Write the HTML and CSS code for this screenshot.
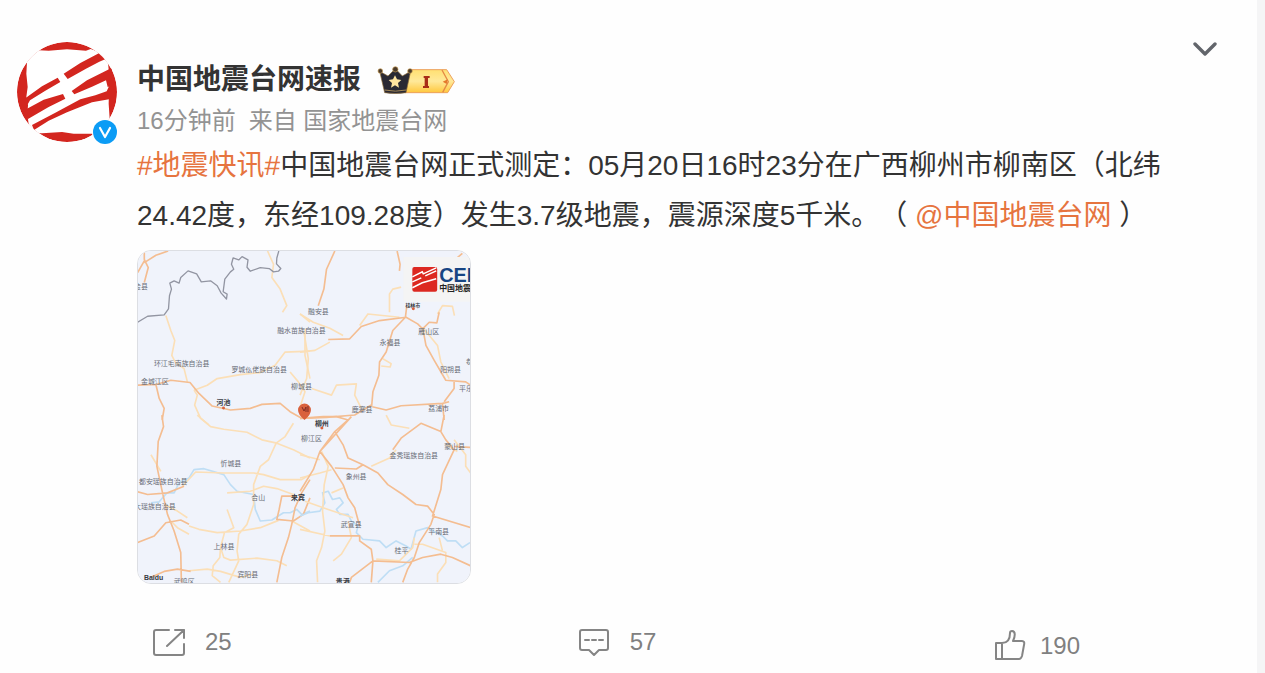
FILE: index.html
```html
<!DOCTYPE html>
<html lang="zh-CN">
<head>
<meta charset="utf-8">
<meta name="viewport" content="width=device-width, initial-scale=1">
<title>中国地震台网速报</title>
<link rel="stylesheet" href="styles.css">
</head>
<body>
<article class="card">
  <header class="head">
    <a class="avatar" href="#" aria-label="中国地震台网速报">
      <svg class="avatar-img" viewBox="15 15 300 300" aria-hidden="true">
        <defs><clipPath id="round"><circle cx="165" cy="165" r="150"/></clipPath></defs>
        <g clip-path="url(#round)">
          <circle cx="165" cy="165" r="150" fill="#d3261f"/>
          <path fill="#fff" d="M0 0H80V40L110 41 165 37 222 41 236 36 270 48 288 76 292 120 290 200 293 245 285 290 240 290 185 290 150 285 90 289 40 289 50 262 46 232 48 205 43 180 47 150 43 110 45 75 0 75Z"/>
          <path fill="#d3261f" d="M155 110L205 78 262 48 285 46 290 62 262 74 222 95 167 126Z"/>
          <path fill="#d3261f" d="M179 162L225 130 270 107 300 92V147L287 150 282 130 240 149 187 172Z"/>
          <path fill="#d3261f" d="M137 122L145 135 100 161 54 190 44 208 32 190 45 180 90 148Z"/>
          <path fill="#d3261f" d="M153 171L160 185 110 210 48 246 34 230 45 215 95 188Z"/>
          <path fill="#d3261f" d="M60 264L130 227 205 187 250 175 284 163 290 150H310V200L291 187 240 196 165 226 110 251 66 279Z"/>
        </g>
      </svg>
      <svg class="verified" viewBox="0 0 26 26" aria-hidden="true"><circle cx="13" cy="13" r="13" fill="#fff"/><circle cx="13" cy="13" r="12" fill="#0c9cf5"/><path d="M8 9l5 9 5-9" fill="none" stroke="#fff" stroke-width="2.2" stroke-linecap="round" stroke-linejoin="round"/></svg>
    </a>
    <div class="who">
      <div class="name-row">
        <a class="name" href="#">中国地震台网速报</a>
        <svg class="badge" viewBox="50 42 234 88" role="img" aria-label="会员 I">
          <defs><linearGradient id="gold" x2="0" y2="1"><stop stop-color="#ffe072"/><stop offset=".5" stop-color="#ffe99a"/><stop offset="1" stop-color="#ffc83d"/></linearGradient></defs>
          <path d="M145 55H259L282 91 262 124H135Z" fill="url(#gold)" stroke="#eda05b" stroke-width="3"/>
          <path d="M245 56L264 91 247 123" fill="none" stroke="#e58a45" stroke-width="4"/>
          <path d="M247 91l15-7-3 14z" fill="#e5792b"/>
          <path d="M58 60L83 74 105 52 126 74 151 60 137 124Q105 129 73 124Z" fill="#2a2933" stroke="#8f6d36" stroke-width="2"/>
          <path d="M73 116Q105 123 138 116" fill="none" stroke="#a38857" stroke-width="3"/>
          <g fill="#4b3a29" stroke="#c59c55" stroke-width="2"><circle cx="60" cy="59" r="7"/><circle cx="105" cy="54" r="8"/><circle cx="149" cy="59" r="7"/></g>
          <path d="M104 72l6 12 13 2-10 9 3 14-12-7-12 7 3-14-10-9 13-2z" fill="#ffe5a0"/>
          <path d="M190 74h18v6h-5v24h3v6h-18v-6h5V80h-3z" fill="#a92e17"/>
        </svg>
      </div>
      <div class="meta"><a href="#">16分钟前</a><span>来自 国家地震台网</span></div>
    </div>
    <button class="more" type="button" aria-label="更多">
      <svg viewBox="0 0 24 14" aria-hidden="true"><path d="M2 2l10 10L22 2" fill="none" stroke="#62656b" stroke-width="3.4" stroke-linecap="round" stroke-linejoin="round"/></svg>
    </button>
  </header>
  <div class="body">
    <p class="text"><a href="#">#地震快讯#</a>中国地震台网正式测定：05月20日16时23分在广西柳州市柳南区（北纬24.42度，东经109.28度）发生3.7级地震，震源深度5千米。（ <a href="#">@中国地震台网</a> ）</p>
    <a class="map" href="#" aria-label="震中地图">
      <svg viewBox="137 250 334 334" aria-hidden="true">
        <rect x="137" y="250" width="334" height="334" fill="#f0f3fb"/>
        <g class="lines" transform="translate(130 245) scale(.33333)">
          <g class="minor">
            <path d="M105 210L120 255 132 285 123 330 133 350 160 370 170 410M190 435L230 420 260 400 330 388 390 382 435 360 465 320 540 317M190 435L200 450 192 480 210 520 235 540M412 15L430 55 425 95 450 130 470 180 457 200M510 205L540 230M525 250V330L540 400M480 380L505 410 525 440 512 480"/>
          </g>
          <g class="major">
            <path d="M40 15V40L52 65 40 110M40 50L75 28 112 15M40 45L20 80M20 420L75 418 120 405 178 412 205 445 245 483 300 495 360 490 395 478 450 475 480 500 515 520M75 418L85 460 100 490 94 525"/>
          </g>
          <path class="border" d="M20 230L50 212 100 208 113 190 116 150 122 130 117 112 130 105 145 112 150 95 172 75 198 84 212 108 240 105 260 120 272 142 288 160 290 145 278 138 283 100 300 78 310 70 303 55 308 36 325 42 335 32 353 42 350 64 360 76 390 65 417 68 430 78 445 76 452 68 439 54 440 36 446 15"/>
        </g>
        <g class="lines" transform="translate(300 245) scale(.33333)">
          <g class="minor">
            <path d="M0 205L40 230 90 248 130 270M12 260L25 340 20 400 0 450M0 320L45 315 90 290M35 430L95 450 110 420 170 416 165 450 185 490M270 200L270 145 280 130 305 124M180 240L205 205 300 215M415 205L430 180 460 182 466 210M370 245L415 300 425 350 450 400M250 340L275 355 272 365 245 362"/>
          </g>
          <g class="major">
            <path d="M105 15L80 70 72 130 55 180M85 282L150 280 185 243 240 225 320 215 355 235 370 250 390 230 413 232 420 200M322 183L318 215 280 255 260 320 240 350 238 390 220 440 216 485M293 15L302 55 300 75M370 245L380 300 405 345 440 405 500 410 515 420M465 410L465 430 435 470M218 485L260 495 305 482 430 475 450 470M0 520L80 517 165 510 215 480M430 475L435 525M475 35L490 22"/>
          </g>
        </g>
        <g class="lines" transform="translate(130 415) scale(.33333)">
          <g class="river"><path d="M60 265L85 262 108 235 130 235 145 205 175 190 190 165 220 162 280 180 300 210 320 230 370 240 375 285 390 320 425 317 460 295 480 295 500 285 515 300 540 290"/></g>
          <g class="minor">
            <path d="M200 0L240 35 280 43 350 52 395 75 440 85 490 105 540 130M490 25L465 65 438 85 415 135 390 155 370 210 370 270 350 330 325 360 320 410 325 440 295 505M155 215L195 172 280 175 370 175 400 180 450 195 515 195 540 180M290 235L360 230 400 215 440 222 490 240M175 335L205 345 260 355 330 350 390 340 445 318M290 285L310 340 282 355 270 400 280 430 300 438 380 432 440 440 470 455M270 400L268 430 248 455 245 485 270 505M60 120L90 170M100 270L140 290 170 310M120 320L140 340 175 360M175 470L230 465 270 472 330 490 370 480M485 320L540 350"/>
          </g>
          <g class="major">
            <path d="M93 0L98 35 82 80 78 155 95 235 110 300 130 350 150 415 152 505M20 232L50 240 110 235 160 215M20 385L70 365 105 325 150 317 175 330M60 490L100 472 140 465 180 472M540 195L515 235 495 280 485 330 475 370 455 430 440 505M500 245H455L447 285 440 315 490 320 520 300 540 250"/>
          </g>
        </g>
        <g class="lines" transform="translate(300 415) scale(.33333)">
          <g class="river"><path d="M0 305L25 295 60 290 75 265 68 235 85 230 98 255 120 250 130 265 110 285 120 300 145 300 155 320 175 335 170 355 190 375 240 380 260 400 290 380 320 395 335 405 350 350 385 340 430 365 445 380 470 380 490 400 513 385M235 505L270 470 310 455 340 430"/></g>
          <g class="minor">
            <path d="M0 190L60 175 95 165M65 110L85 155 73 210 68 290 75 350 65 400 50 440 53 505M0 120L60 135M15 260L85 285 160 310M0 345L90 365M130 220L95 235M215 155L270 130 290 105M260 0L275 30 330 40M465 75L500 120 500 155 515 175M145 320L155 370 125 420 100 440M345 390L370 390 440 415 440 445 415 480 415 505M420 370L430 410M230 435L300 440 340 400 345 370M440 90L475 110"/>
          </g>
          <g class="major">
            <path d="M0 10L70 5 110 5 145 15 105 50 60 110 40 165 0 230M105 50L130 90 145 130 190 150 235 175 265 210 310 240 350 270 385 275 405 300 395 330 360 385 345 430 325 465 310 505M60 110L95 155 130 210 145 250 165 280 180 335M105 160L170 163 190 150M280 105L305 70 365 25 425 50 435 0M425 50L440 75 465 105 430 180 425 225 400 305 515 340M90 365L180 365 180 380 215 405 220 440 155 490 150 505M220 440L330 445 370 430 425 420 460 430 515 455M220 440L215 505M465 95L515 98M60 110L155 5"/>
          </g>
        </g>
        <rect x="404" y="256" width="67" height="45" fill="#f4f4f4"/>
        <g class="place">
          <text x="133" y="288">金县</text><text x="308" y="313">融安县</text><text x="277" y="333">融水苗族自治县</text><text x="380" y="345">永福县</text><text x="419" y="334">雁山区</text><text x="153" y="366">环江毛南族自治县</text><text x="231" y="372">罗城仫佬族自治县</text><text x="140" y="384">金城江区</text><text x="291" y="389">柳城县</text><text x="441" y="372">阳朔县</text><text x="460" y="391">平乐</text><text x="352" y="412">鹿寨县</text><text x="429" y="411">荔浦市</text><text x="301" y="441">柳江区</text><text x="220" y="466">忻城县</text><text x="390" y="458">金秀瑶族自治县</text><text x="445" y="449">蒙山县</text><text x="346" y="479">象州县</text><text x="138" y="484">都安瑶族自治县</text><text x="133" y="510">大瑶族自治县</text><text x="251" y="501">合山</text><text x="341" y="528">武宣县</text><text x="429" y="535">平南县</text><text x="213" y="550">上林县</text><text x="395" y="554">桂平</text><text x="237" y="578">宾阳县</text><text x="173" y="585">武鸣区</text><text x="467" y="364">恭</text>
        </g>
        <g class="city"><text x="216" y="405">河池</text><text x="315" y="426">柳州</text><text x="291" y="501">来宾</text><text x="336" y="585">贵港</text><text class="tiny" x="406" y="306">桂林市</text><text x="143" y="581">Baidu</text></g>
        <g fill="#d9613c"><circle cx="414" cy="308" r="1.5"/><circle cx="223" cy="408" r="1.5"/><circle cx="322" cy="428" r="1.5"/><path d="M298 410a6 6 0 0 1 13 0q0 5-6.500 10-6.500-5-6.500-10"/></g>
        <path d="M302 407l2 4 2-4v5M308 406v6" fill="none" stroke="#7a2923"/>
        <rect x="413" y="266" width="25" height="25" rx="2" fill="#dc2820"/>
        <path d="M413 276l10-5 1 2 13-6M413 281l9-4M426 275l11-5M413 287l10-5 14-4" fill="none" stroke="#fff" stroke-width="1.5"/>
        <text class="logo" x="440" y="281">CENC</text><text class="logo-sub" x="440" y="290">中国地震台网</text>
      </svg>
    </a>
  </div>
  <footer class="actions">
    <button type="button" aria-label="转发 25"><svg viewBox="0 0 32 28" aria-hidden="true"><path d="M16 2H3Q1 2 1 4V25Q1 27 3 27H29Q31 27 31 25V16M14 18L31 2M22 2H31V10"/></svg><span>25</span></button>
    <button type="button" aria-label="评论 57"><svg viewBox="0 0 32 28" aria-hidden="true"><path d="M4 2H28Q30 2 30 4V20Q30 22 28 22H21L16 27 11 22H4Q2 22 2 20V4Q2 2 4 2ZM7 12h4m3 0h4m3 0h4"/></svg><span>57</span></button>
    <button class="like" type="button" aria-label="赞 190"><svg viewBox="0 0 32 32" aria-hidden="true"><path d="M2 13H8V29H2ZM8 13C13 13 16 10 16 3Q16 1 18 1C22 1 21 7 19 11H28Q31 11 30 15L28 26Q27 29 25 29H8"/></svg><span>190</span></button>
  </footer>
</article>
</body>
</html>
```
FILE: styles.css
```css
* { box-sizing: border-box; }
body {
  margin: 0;
  background: #f5f5f6;
  color: #333;
  font-family: "Liberation Sans", "Noto Sans CJK SC", sans-serif;
}
a { color: inherit; text-decoration: none; }
button { padding: 0; border: 0; background: none; font: inherit; color: inherit; cursor: pointer; }
svg { display: block; }
.card { min-height: 100vh; margin-right: 8px; padding: 42px 40px 8px 17px; background: #fefefe; }
.head { display: flex; gap: 20px; }
.avatar { position: relative; flex: none; width: 100px; height: 98px; }
.avatar-img { width: 100px; height: 100px; }
.verified { position: absolute; right: -1px; bottom: -5px; width: 26px; height: 26px; }
.who { flex: 1; padding-top: 17px; }
.name-row { display: flex; align-items: center; gap: 16px; height: 42px; }
.name { font-size: 28px; line-height: 42px; font-weight: 700; }
.badge { width: 78px; height: 30px; }
.meta { display: flex; gap: 13px; font-size: 24px; line-height: 40px; color: #939393; }
.more { align-self: flex-start; width: 24px; height: 14px; }
.more svg { width: 24px; height: 14px; }
.body { padding-left: 120px; }
.text { margin: 0 0 9px; font-size: 28px; line-height: 50px; text-spacing-trim: space-all; }
.text a { color: #e6743f; }
.map { display: block; width: 334px; border: 1px solid #dcdee3; border-radius: 14px; overflow: hidden; }
.map svg { width: 100%; }
.lines path { fill: none; stroke-linejoin: round; }
.minor { stroke: #fbdfb7; stroke-width: 5px; }
.major { stroke: #f4bd91; stroke-width: 5px; }
.river { stroke: #bfdef5; stroke-width: 5px; }
.lines .border { stroke: #9295a2; stroke-width: 4px; }
.place { font-size: 7px; fill: #686c76; }
.city { font-size: 7px; font-weight: 700; fill: #373a42; }
.tiny { font-size: 5px; }
.logo { font-size: 20px; font-weight: 700; fill: #174583; }
.logo-sub { font-size: 8px; font-weight: 700; fill: #222; }
.actions {
  display: grid;
  grid-template-columns: 51fr 50fr auto;
  align-items: start;
  margin-top: 42px;
  padding: 0 137px 0 136px;
  font-size: 24px;
  line-height: 32px;
  color: #808080;
}
.actions button { display: flex; align-items: center; justify-self: start; gap: 20px; }
.actions svg { width: 32px; height: 32px; fill: none; stroke: #858585; stroke-width: 2; stroke-linejoin: round; stroke-linecap: round; }
.actions .like { gap: 14px; padding-top: 4px; }
```
